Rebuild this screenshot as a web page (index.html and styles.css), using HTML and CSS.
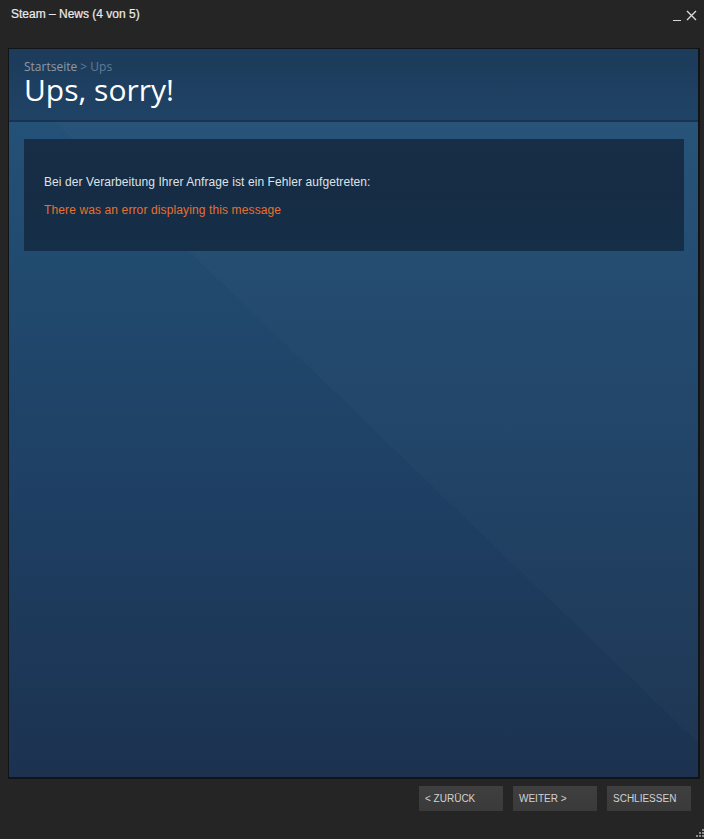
FILE: index.html
```html
<!DOCTYPE html>
<html lang="de">
<head>
<meta charset="utf-8">
<title>Steam – News (4 von 5)</title>
<link rel="stylesheet" href="styles.css">
</head>
<body>
<div class="window">
  <div class="titlebar">
    <span class="title">Steam – News (4 von 5)</span>
    <div class="controls">
      <span class="ctl-min"></span>
      <svg class="ctl-close" width="11" height="11" viewBox="0 0 11 11"><path d="M1 1L10 10M10 1L1 10" stroke="#d8d8d8" stroke-width="1.4" fill="none"/></svg>
    </div>
  </div>
  <div class="frame">
    <div class="header">
      <div class="crumbs"><span class="crumb-home">Startseite</span> <span class="crumb-cur">&gt; Ups</span></div>
      <h1 class="heading">Ups, sorry!</h1>
    </div>
    <div class="body">
      <div class="errbox">
        <p class="errmsg">Bei der Verarbeitung Ihrer Anfrage ist ein Fehler aufgetreten:</p>
        <p class="errdetail">There was an error displaying this message</p>
      </div>
    </div>
  </div>
  <div class="footer">
    <button class="btn">&lt; ZURÜCK</button>
    <button class="btn">WEITER &gt;</button>
    <button class="btn">SCHLIESSEN</button>
  </div>
  <svg class="grip" width="10" height="10" viewBox="0 0 10 10">
    <rect x="8" y="0" width="2" height="2" fill="#8a8a8a"/>
    <rect x="5" y="3" width="2" height="2" fill="#8a8a8a"/>
    <rect x="8" y="3" width="2" height="2" fill="#8a8a8a"/>
    <rect x="2" y="6" width="2" height="2" fill="#8a8a8a"/>
    <rect x="5" y="6" width="2" height="2" fill="#8a8a8a"/>
    <rect x="8" y="6" width="2" height="2" fill="#8a8a8a"/>
  </svg>
</div>
</body>
</html>
```
FILE: styles.css
```css
* { box-sizing: border-box; }
html, body { margin: 0; padding: 0; }
body {
  background: #262626;
  font-family: "Liberation Sans", Arial, sans-serif;
}
.window {
  position: relative;
  width: 704px;
  height: 839px;
  background: #252525;
  display: flex;
  flex-direction: column;
}
.titlebar {
  height: 48px;
  display: flex;
  justify-content: space-between;
  align-items: flex-start;
  padding: 7px 11px 0 11px;
}
.title {
  color: #ececec;
  font-size: 12px;
  font-weight: normal;
  -webkit-text-stroke: 0.2px #ececec;
}
.controls {
  display: flex;
  align-items: flex-start;
  gap: 5px;
  padding-top: 3px;
  margin-right: -4px;
}
.ctl-min {
  display: block;
  width: 8px;
  height: 1px;
  background: #d8d8d8;
  margin-top: 10px;
}
.ctl-close { display: block; }
.frame {
  margin-left: 8px;
  width: 692px;
  height: 731px;
  border: 1px solid #111417;
  border-right-width: 2px;
  border-bottom-width: 2px;
  display: flex;
  flex-direction: column;
  background: #1c3352;
}
.header {
  height: 73px;
  background: linear-gradient(180deg, #1d3b5a 0%, #1f4366 100%);
  border-bottom: 2px solid #1a3350;
  padding: 11px 15px 0 15px;
}
.crumbs {
  font-family: "Open Sans", sans-serif;
  font-size: 12px;
  line-height: 14px;
  color: #8f9aa5;
}
.crumb-cur { color: #5f7d99; }
.heading {
  margin: 0;
  font-family: "Open Sans", sans-serif;
  font-weight: normal;
  font-size: 30px;
  line-height: 32px;
  color: #ffffff;
}
.body {
  flex: 1;
  padding: 17px 14px 0 15px;
  background:
    linear-gradient(44deg, rgba(0,0,0,0) 53%, rgba(255,255,255,0.015) 53%),
    linear-gradient(180deg, #245177 0%, #21496e 25%, #1e4064 55%, #1c3250 100%);
}
.errbox {
  height: 112px;
  background: linear-gradient(180deg, #172e46 0%, #152c44 50%, #152f48 100%);
  padding: 36px 20px 0 20px;
}
.errmsg {
  margin: 0 0 14px 0;
  color: #dfe3e6;
  font-size: 12px;
  line-height: 14px;
  letter-spacing: 0.08px;
}
.errdetail {
  margin: 0;
  color: #e8702e;
  font-size: 12px;
  line-height: 14px;
  letter-spacing: 0.12px;
}
.footer {
  display: flex;
  justify-content: flex-end;
  gap: 10px;
  padding: 7px 13px 0 0;
}
.btn {
  width: 84px;
  height: 25px;
  border: none;
  background: linear-gradient(180deg, #3f3f3f 0%, #3a3a3a 100%);
  color: #d2d2d2;
  font-family: "Liberation Sans", Arial, sans-serif;
  font-size: 10px;
  text-align: left;
  padding: 0 6px;
  cursor: pointer;
}
.grip {
  position: absolute;
  right: 0;
  bottom: 0;
}
```
